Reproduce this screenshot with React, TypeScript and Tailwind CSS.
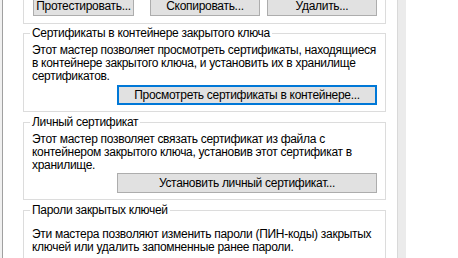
import React from "react";

const font = { fontFamily: '"Liberation Sans", Arial, sans-serif', letterSpacing: "-0.3px" };

function Btn({ children, className = "", def = false }: { children: React.ReactNode; className?: string; def?: boolean }) {
  return (
    <div
      className={
        "flex h-[20px] shrink-0 items-center justify-center bg-[#e1e1e1] text-[12px] leading-[12px] text-black whitespace-nowrap " +
        (def ? "border-2 border-[#0078d7] " : "border border-[#adadad] ") +
        className
      }
    >
      {children}
    </div>
  );
}

function Group({ title, children, className = "" }: { title: string; children: React.ReactNode; className?: string }) {
  return (
    <fieldset className={"min-w-0 border border-[#dcdcdc] px-[8px] pb-[6px] " + className}>
      <legend className="-ml-[2px] px-[2px] text-[12px] leading-[15px] text-black">{title}</legend>
      {children}
    </fieldset>
  );
}

export default function App() {
  return (
    <div className="flex h-[258px] w-[458px] overflow-hidden bg-white" style={font}>
      <div className="w-[2px] shrink-0 bg-[#f0f0f0]" />
      <div className="w-[1px] shrink-0 bg-[#a0a0a0]" />
      <div className="flex w-[394px] shrink-0 flex-col pl-[20px] pr-[11px]">
        <div className="-mt-[20px] flex h-[44px] shrink-0 items-end border border-[#dcdcdc] pb-[7px] pl-[9px]">
          <Btn className="w-[101px]">Протестировать...</Btn>
          <Btn className="ml-[16px] w-[110px]">Скопировать...</Btn>
          <Btn className="ml-[7px] w-[110px]">Удалить...</Btn>
        </div>
        <Group title="Сертификаты в контейнере закрытого ключа" className="mt-[2px] shrink-0">
          <div className="pt-[3px] text-[12px] leading-[13px] text-black whitespace-nowrap">
            Этот мастер позволяет просмотреть сертификаты, находящиеся
            <br />в контейнере закрытого ключа, и установить их в хранилище
            <br />сертификатов.
          </div>
          <div className="mt-[2px] flex justify-end">
            <Btn def className="w-[260px]">Просмотреть сертификаты в контейнере...</Btn>
          </div>
        </Group>
        <Group title="Личный сертификат" className="mt-[3px] shrink-0">
          <div className="pt-[3px] text-[12px] leading-[13px] text-black whitespace-nowrap">
            Этот мастер позволяет связать сертификат из файла с
            <br />контейнером закрытого ключа, установив этот сертификат в
            <br />хранилище.
          </div>
          <div className="mt-[1px] flex justify-end">
            <Btn className="w-[260px]">Установить личный сертификат...</Btn>
          </div>
        </Group>
        <Group title="Пароли закрытых ключей" className="mt-[3px] shrink-0">
          <div className="pt-[10px] text-[12px] leading-[13px] text-black whitespace-nowrap">
            Эти мастера позволяют изменить пароли (ПИН-коды) закрытых
            <br />ключей или удалить запомненные ранее пароли.
          </div>
          <div className="h-[40px]" />
        </Group>
      </div>
      <div className="w-[9px] shrink-0 border-l border-[#d9d9d9] bg-[#ebebeb]" />
      <div className="flex-1 bg-white" />
    </div>
  );
}
